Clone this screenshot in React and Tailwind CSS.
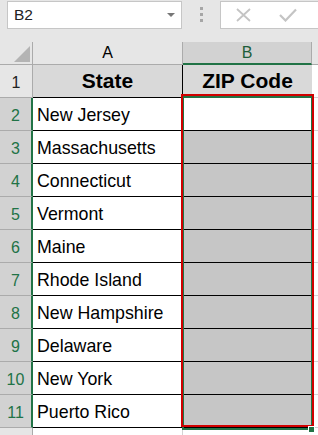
import React from "react";

const states = [
  "New Jersey",
  "Massachusetts",
  "Connecticut",
  "Vermont",
  "Maine",
  "Rhode Island",
  "New Hampshire",
  "Delaware",
  "New York",
  "Puerto Rico",
];

const App = () => {
  return (
    <div className="relative w-[318px] h-[435px] overflow-hidden bg-[#e6e6e6] font-['Liberation_Sans',Arial,sans-serif] text-black">
      {/* Formula bar */}
      <div className="flex h-[42px] items-start pt-[1px]">
        <div className="ml-[7px] flex h-[28px] w-[175px] items-center justify-between border border-[#c6c6c6] bg-white pl-[6px] pr-[6px]">
          <span className="text-[15.5px] text-[#222]">B2</span>
          <svg width="8" height="5" viewBox="0 0 8 5">
            <polygon points="0,0 8,0 4,4" fill="#777" />
          </svg>
        </div>
        <div className="flex w-[38px] flex-col items-center gap-[3px] pt-[6px]">
          <div className="h-[3px] w-[3px] bg-[#a6a6a6]" />
          <div className="h-[3px] w-[3px] bg-[#a6a6a6]" />
          <div className="h-[3px] w-[3px] bg-[#a6a6a6]" />
        </div>
        <div className="flex h-[28px] flex-1 items-center gap-[28px] border-y border-l border-[#c6c6c6] bg-white pl-[15px]">
          <svg width="15" height="14" viewBox="0 0 15 14">
            <path d="M1 1 L14 13 M14 1 L1 13" stroke="#c4c4c4" strokeWidth="1.8" fill="none" />
          </svg>
          <svg width="18" height="14" viewBox="0 0 18 14">
            <path d="M1 7 L6.5 12.5 L17 1.5" stroke="#c4c4c4" strokeWidth="2.2" fill="none" />
          </svg>
        </div>
      </div>

      {/* Sheet grid */}
      <div className="grid h-[393px] grid-cols-[33px_150px_129px_1fr] grid-rows-[23px_repeat(11,33px)_1fr]">
        {/* Column headers */}
        <div className="flex items-end justify-end border-r border-b border-[#ababab] pr-[2px] pb-[2px]">
          <svg width="16" height="16" viewBox="0 0 16 16">
            <polygon points="16,0 16,16 0,16" fill="#b4b4b4" />
          </svg>
        </div>
        <div className="flex items-center justify-center border-r border-b border-[#ababab] text-[16px]">
          A
        </div>
        <div className="flex items-center justify-center border-r border-b-2 border-r-[#ababab] border-b-[#217346] bg-[#d2d2d2] text-[16px] text-[#1d5e3a]">
          B
        </div>
        <div className="border-b border-[#ababab]" />

        {/* Row 1 */}
        <div className="flex items-end justify-center border-r border-b border-[#ababab] pb-[2px] text-[16px] text-[#222]">
          1
        </div>
        <div className="flex items-end justify-center border-r border-b border-black bg-[#d9d9d9] pb-[4px] text-[21px] font-bold leading-[24px]">
          State
        </div>
        <div className="flex items-end justify-center border-b border-black bg-[#d9d9d9] pb-[4px] text-[21px] font-bold leading-[24px]">
          ZIP Code
        </div>
        <div className="border-b border-[#d4d4d4] bg-white" />

        {/* Rows 2-11 */}
        {states.map((name, i) => (
          <React.Fragment key={name}>
            <div className="flex items-end justify-center border-r-2 border-b border-r-[#217346] border-b-[#ababab] bg-[#d2d2d2] pb-[2px] text-[16px] text-[#217346]">
              {i + 2}
            </div>
            <div className="flex items-end border-r border-b border-black bg-white pb-[5px] pl-[4px] text-[17.8px] leading-[20px]">
              {name}
            </div>
            <div className={`border-b border-black ${i === 0 ? "bg-white" : "bg-[#c6c6c6]"}`} />
            <div className="border-b border-[#d4d4d4] bg-white" />
          </React.Fragment>
        ))}

        {/* Row 12 (cut off) */}
        <div className="border-r border-[#ababab]" />
        <div className="border-r border-[#d4d4d4] bg-white" />
        <div className="bg-white" />
        <div className="bg-white" />
      </div>

      {/* Selection border */}
      <div className="absolute left-[182px] top-[96px] h-[334px] w-[131px] border-2 border-[#217346]" />
      {/* Red annotation box */}
      <div className="absolute left-[181px] top-[94px] h-[333px] w-[133px] border-2 border-[#d00000]" />
      {/* Fill handle */}
      <div className="absolute left-[308px] top-[426px] h-[7px] w-[7px] border border-white bg-[#217346]" />
    </div>
  );
};

export default App;
